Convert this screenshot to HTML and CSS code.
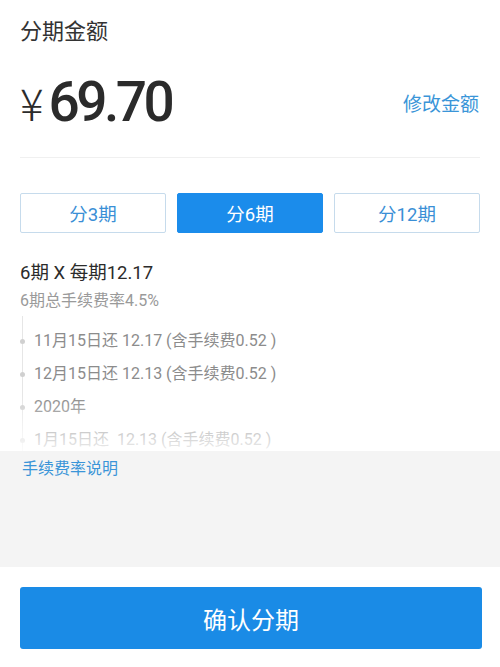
FILE: index.html
```html
<!DOCTYPE html>
<html>
<head>
  <meta charset="utf-8">
  <title>分期金额</title>
  <link rel="stylesheet" href="styles.css">
</head>
<body>
  <main class="page">
    <section class="amount-section">
      <h1 class="amount-title">分期金额</h1>
      <div class="amount-row">
        <div class="amount"><span class="currency">¥</span><span class="value">69.70</span></div>
        <a class="edit-link">修改金额</a>
      </div>
    </section>

    <section class="plan-section">
      <div class="tabs">
        <button class="tab">分3期</button>
        <button class="tab active">分6期</button>
        <button class="tab">分12期</button>
      </div>
      <p class="plan-summary">6期 X 每期12.17</p>
      <p class="plan-rate">6期总手续费率4.5%</p>

      <div class="schedule">
        <ul class="timeline">
          <li>11月15日还 12.17 (含手续费0.52 )</li>
          <li>12月15日还 12.13 (含手续费0.52 )</li>
          <li>2020年</li>
          <li>1月15日还&nbsp; 12.13 (含手续费0.52 )</li>
        </ul>
        <div class="fade"></div>
      </div>
    </section>

    <section class="note-section">
      <a class="note-link">手续费率说明</a>
    </section>

    <footer class="footer">
      <button class="confirm">确认分期</button>
    </footer>
  </main>
</body>
</html>
```

FILE: styles.css
```css
body {
  margin: 0;
  padding: 0;
  background-color: #ffffff;
  font-family: Roboto, "Noto Sans CJK SC", sans-serif;
  color: #333333;
}
.page {
  width: 500px;
  height: 667px;
  display: flex;
  flex-direction: column;
}
.amount-section {
  padding: 18px 20px 0 20px;
}
.amount-title {
  margin: 0;
  font-size: 22px;
  font-weight: 400;
  line-height: 28px;
  color: #333333;
}
.amount-row {
  display: flex;
  justify-content: space-between;
  align-items: center;
  height: 60px;
  margin-top: 26px;
  padding-bottom: 25px;
  border-bottom: 1px solid #f0f0f0;
}
.amount {
  display: flex;
  align-items: baseline;
  color: #2b2b2b;
}
.currency {
  font-family: "Noto Sans CJK SC", sans-serif;
  font-size: 44px;
  font-weight: 300;
  margin-right: 5px;
}
.value {
  font-size: 55px;
  font-weight: 500;
  letter-spacing: -3.5px;
}
.edit-link {
  font-size: 19px;
  color: #3a95d8;
  margin-right: 1px;
}
.plan-section {
  padding: 35px 20px 0 20px;
}
.tabs {
  display: flex;
  gap: 11px;
}
.tab {
  flex: 1;
  height: 40px;
  font-family: Roboto, "Noto Sans CJK SC", sans-serif;
  font-size: 18.5px;
  color: #3a8fd6;
  background-color: #ffffff;
  border: 1px solid #c6dbec;
  border-radius: 2px;
  padding: 0;
}
.tab.active {
  background-color: #1b8ceb;
  border-color: #1b8ceb;
  color: #ffffff;
}
.plan-summary {
  margin: 28px 0 0 0;
  font-size: 18.5px;
  line-height: 24px;
  color: #2b2b2b;
}
.plan-rate {
  margin: 5px 0 0 0;
  font-size: 16px;
  line-height: 22px;
  color: #9a9a9a;
}
.schedule {
  position: relative;
  height: 135px;
  overflow: hidden;
  margin-top: 4px;
}
.timeline {
  list-style: none;
  margin: 0;
  padding: 16px 0 0 0;
  border-left: 1px solid #e6e6e6;
  margin-left: 2px;
}
.timeline li {
  position: relative;
  padding-left: 11px;
  height: 33px;
  line-height: 18px;
  font-size: 16px;
  color: #8c8c8c;
}
.timeline li::before {
  content: "";
  position: absolute;
  left: -3px;
  top: 7px;
  width: 5px;
  height: 5px;
  border-radius: 50%;
  background-color: #d0d0d0;
}
.fade {
  position: absolute;
  left: 0;
  right: 0;
  bottom: 0;
  height: 55px;
  background: linear-gradient(rgba(255, 255, 255, 0), rgba(255, 255, 255, 0.85));
}
.note-section {
  background-color: #f4f4f4;
  height: 116px;
  padding: 8px 22px 0 22px;
  box-sizing: border-box;
}
.note-link {
  display: block;
  font-size: 16px;
  line-height: 20px;
  color: #3a95d8;
}
.footer {
  padding: 20px 18px 0 20px;
}
.confirm {
  width: 100%;
  height: 62px;
  border: none;
  border-radius: 3px;
  background-color: #1a8be6;
  color: #ffffff;
  font-family: "Noto Sans CJK SC", sans-serif;
  font-size: 24px;
}
```
